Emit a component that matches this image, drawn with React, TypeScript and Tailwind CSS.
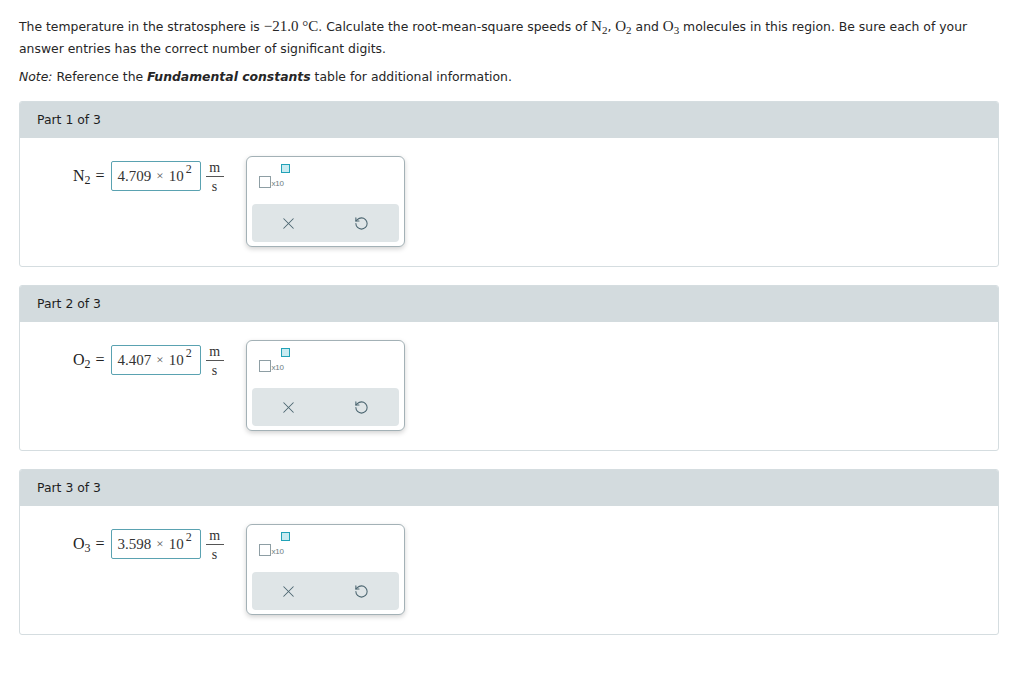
import { RotateCcw, X } from 'lucide-react'

const parts = [
  { n: 1, el: 'N', sub: '2', value: '4.709' },
  { n: 2, el: 'O', sub: '2', value: '4.407' },
  { n: 3, el: 'O', sub: '3', value: '3.598' },
]

const serif = { fontFamily: '"Liberation Serif", "DejaVu Serif", serif' }

function Chem({ el, sub }: { el: string; sub: string }) {
  return (
    <span style={serif} className="text-[15px]">
      {el}
      <sub className="relative top-[3px] align-baseline text-[11px]">{sub}</sub>
    </span>
  )
}

function SciIcon() {
  return (
    <div className="relative flex h-[20px] w-[34px] items-end">
      <div className="h-[12px] w-[12px] border-[1.5px] border-[#8e9ea4]" />
      <span className="ml-[1px] font-['Liberation_Sans',sans-serif] text-[8px] leading-none tracking-[-0.3px] text-[#6c7c82]">
        x10
      </span>
      <div className="absolute left-[22px] top-[-4px] h-[9px] w-[9px] border-[1.5px] border-[#22a2b7] bg-[#c9ebf1]" />
    </div>
  )
}

function ToolPanel() {
  return (
    <div className="flex h-[91px] w-[159px] flex-col rounded-[6px] border border-[#a3b1b6] bg-white px-[5px] pb-[4px] shadow-[0_2px_5px_rgba(0,0,0,0.18)]">
      <div className="flex flex-1 items-start pl-[7px] pt-[11px]">
        <SciIcon />
      </div>
      <div className="flex h-[38px] rounded-[4px] bg-[#dfe5e7]">
        <button className="flex flex-1 items-center justify-center text-[#4c6671]">
          <X size={19} strokeWidth={1.3} />
        </button>
        <button className="flex flex-1 items-center justify-center text-[#4c6671]">
          <RotateCcw size={15} strokeWidth={1.7} />
        </button>
      </div>
    </div>
  )
}

function Answer({ el, sub, value }: { el: string; sub: string; value: string }) {
  return (
    <div className="flex items-start pt-[5px]">
      <div className="flex h-[30px] items-center text-[#222]">
        <span style={serif} className="text-[16px]">
          {el}
          <sub className="relative top-[3px] align-baseline text-[12px]">{sub}</sub>
        </span>
        <span style={serif} className="ml-[5px] mr-[6px] text-[16px]">=</span>
      </div>
      <div
        style={serif}
        className="flex h-[30px] w-[90px] items-center rounded-[2px] border border-[#5aa2b1] pl-[6px] text-[15px] text-[#333]"
      >
        <span>{value}</span>
        <span className="mx-[5px] text-[13px] text-[#555]">×</span>
        <span>10</span>
        <span className="ml-[2px] mt-[1px] self-start text-[12px] leading-[12px]">2</span>
      </div>
      <div style={serif} className="ml-[4px] flex w-[20px] flex-col items-center text-[14px] leading-[13px] text-[#333]">
        <span className="pb-[2px]">m</span>
        <div className="h-px w-[18px] bg-[#555]" />
        <span className="pt-[3px]">s</span>
      </div>
    </div>
  )
}

function PartCard({ n, el, sub, value }: { n: number; el: string; sub: string; value: string }) {
  return (
    <div className="overflow-hidden rounded-[3px] border border-[#d5dde0]">
      <div className="flex h-[36px] items-center bg-[#d3dbde] pl-[17px] text-[#1e1e1e]">Part {n} of 3</div>
      <div className="flex gap-[21px] pb-[19px] pl-[53px] pt-[18px]">
        <Answer el={el} sub={sub} value={value} />
        <ToolPanel />
      </div>
    </div>
  )
}

export default function App() {
  return (
    <div className="min-h-screen bg-white font-['DejaVu_Sans',sans-serif] text-[12.4px] text-[#262626]">
      <div className="ml-[19px] w-[980px] pt-[15px]">
        <p className="whitespace-nowrap leading-[22px]">
          The temperature in the stratosphere is{' '}
          <span style={serif} className="text-[15px]">−21.0 °C</span>. Calculate the root-mean-square speeds of{' '}
          <Chem el="N" sub="2" />, <Chem el="O" sub="2" /> and <Chem el="O" sub="3" /> molecules in this region. Be sure
          each of your
          <br />
          answer entries has the correct number of significant digits.
        </p>
        <p className="mt-[6px] leading-[22px]">
          <i>Note:</i> Reference the <b className="italic">Fundamental constants</b> table for additional information.
        </p>
        <div className="mt-[13px] flex flex-col gap-[18px]">
          {parts.map((p) => (
            <PartCard key={p.n} n={p.n} el={p.el} sub={p.sub} value={p.value} />
          ))}
        </div>
      </div>
    </div>
  )
}
